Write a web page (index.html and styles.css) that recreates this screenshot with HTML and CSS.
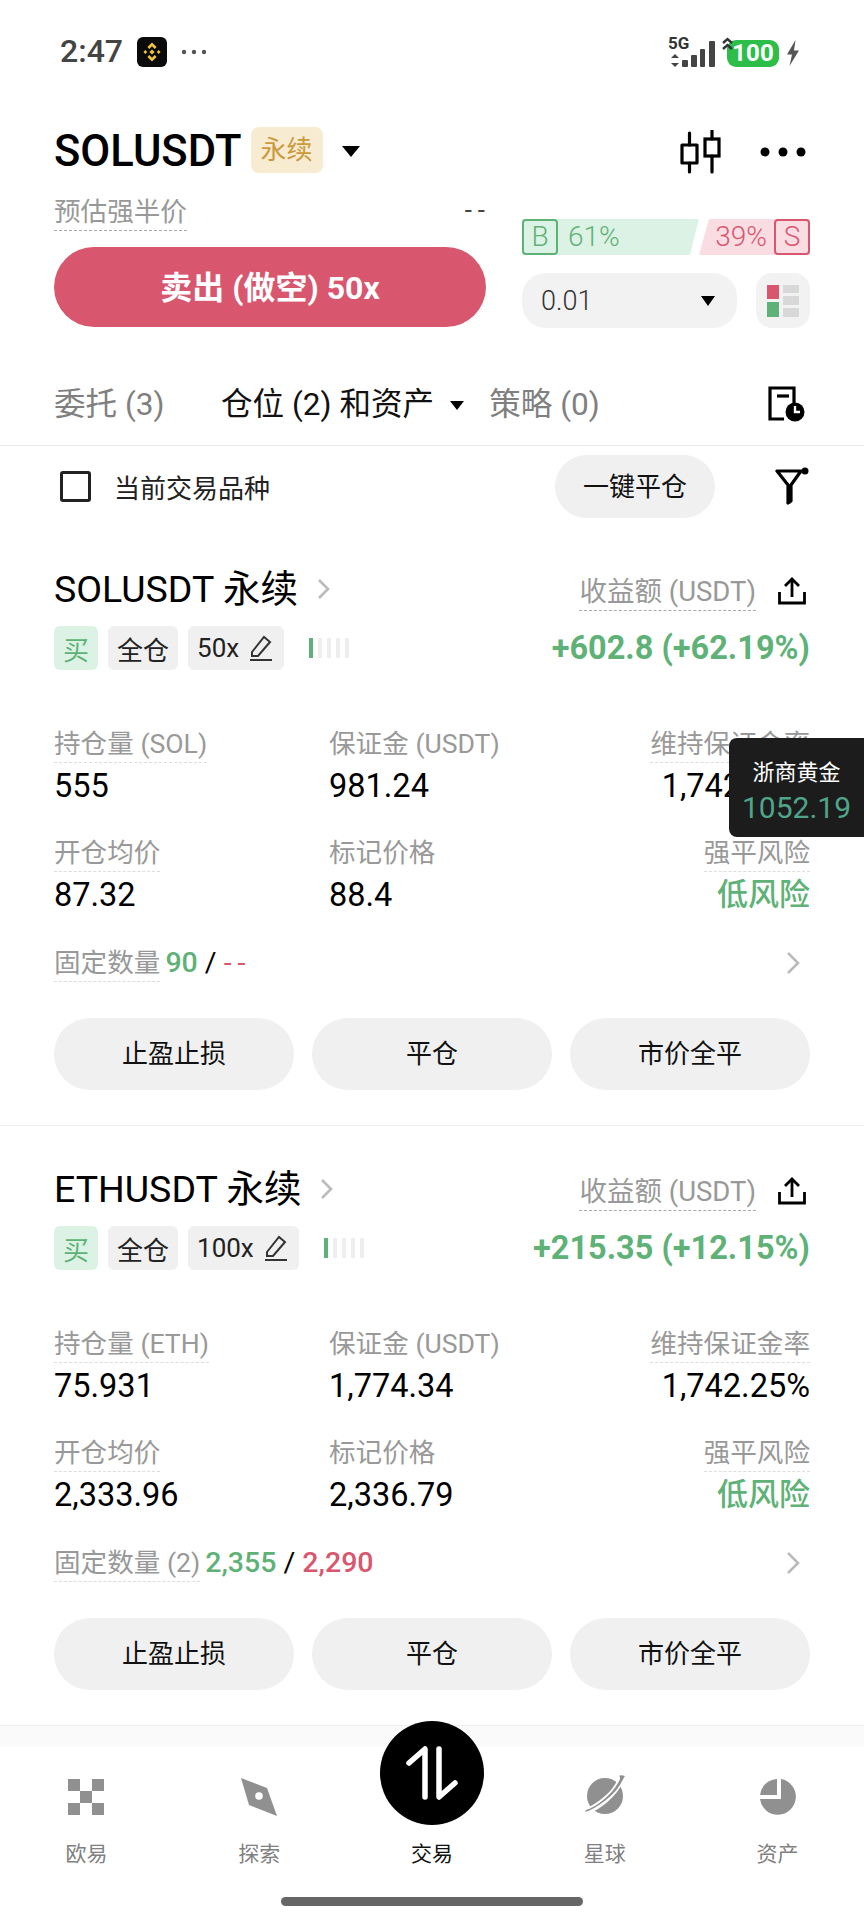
FILE: index.html
```html
<!DOCTYPE html>
<html lang="zh-CN">
<head>
    <meta charset="UTF-8">
    <meta name="viewport" content="width=device-width, initial-scale=1.0">
    <title>SOLUSDT 永续</title>
    <link rel="stylesheet" href="styles.css">
</head>
<body>
<div class="screen">

    <div class="statusbar">
        <div class="status-left">
            <span class="clock">2:47</span>
            <svg class="bn-logo" width="30" height="30" viewBox="0 0 30 30">
                <rect width="30" height="30" rx="6" fill="#0b0b0b"/>
                <path fill="#f0c33c" d="M15 5.500l4.600 4.600-1.900 1.900L15 9.300 12.300 12l-1.900-1.900zM15 24.500l-4.600-4.600 1.900-1.900 2.700 2.700 2.700-2.700 1.900 1.900zM6.400 15l1.900-1.900 1.900 1.900-1.900 1.900zM19.800 15l1.900-1.900 1.900 1.900-1.900 1.900zM15 12.400l2.600 2.600-2.600 2.600-2.600-2.600z"/>
            </svg>
            <svg width="26" height="6" viewBox="0 0 26 6" fill="#555"><circle cx="3" cy="3" r="2.200"/><circle cx="13" cy="3" r="2.200"/><circle cx="23" cy="3" r="2.200"/></svg>
        </div>
        <div class="status-right">
            <div class="signal">
                <span class="net-type">5G</span>
                <svg width="50" height="34" viewBox="0 0 50 34" fill="#444">
                    <path d="M9 18l4 4H5zM9 31l-4-4h8z"/>
                    <rect x="16" y="24" width="6" height="7" rx="1"/>
                    <rect x="25" y="19" width="6" height="12" rx="1"/>
                    <rect x="34" y="13" width="5" height="18" rx="1"/>
                    <rect x="43" y="5" width="6" height="26" rx="1"/>
                </svg>
            </div>
            <div class="battery">
                <svg class="battery-arrows" width="13" height="14" viewBox="0 0 13 14" fill="none" stroke="#333" stroke-width="2.400"><path d="M2 6l4.500-4 4.500 4M2 12l4.500-4 4.500 4"/></svg>
                <span>100</span>
            </div>
            <svg width="14" height="26" viewBox="0 0 14 26" fill="#555"><path d="M9.500 0L1 14.500h5L3.500 26 13 10.500H8z"/></svg>
        </div>
    </div>

    <div class="title-row">
        <div class="title-left">
            <span class="symbol">SOLUSDT</span>
            <span class="perp-badge">永续</span>
            <span class="caret caret-lg"></span>
        </div>
        <div class="title-right">
            <svg width="44" height="44" viewBox="0 0 44 44" fill="none" stroke="#000" stroke-width="3.200" stroke-linecap="round">
                <rect x="3" y="15" width="15" height="18" stroke-linejoin="round"/>
                <path d="M10.500 3v12M10.500 33v9"/>
                <rect x="26" y="9" width="14" height="17"/>
                <path d="M33 1v8M33 26v16"/>
            </svg>
            <svg width="46" height="10" viewBox="0 0 46 10" fill="#000"><circle cx="5" cy="5" r="4.500"/><circle cx="23" cy="5" r="4.500"/><circle cx="41" cy="5" r="4.500"/></svg>
        </div>
    </div>

    <div class="order-panel">
        <div class="order-left">
            <div class="liq-row">
                <span class="dash-label dash-dark">预估强半价</span>
                <span class="liq-value">--</span>
            </div>
            <div class="sell-btn">卖出 (做空) 50x</div>
        </div>
        <div class="order-right">
            <div class="ratio">
                <div class="ratio-buy">
                    <span class="ratio-box">B</span>
                    <span>61%</span>
                </div>
                <div class="ratio-sell">
                    <span>39%</span>
                    <span class="ratio-box">S</span>
                </div>
            </div>
            <div class="lot-row">
                <div class="lot-input">
                    <span>0.01</span>
                    <span class="caret caret-sm"></span>
                </div>
                <div class="book-btn">
                    <svg width="32" height="32" viewBox="0 0 32 32">
                        <rect x="0" y="0" width="12" height="14" fill="#d9566f"/>
                        <rect x="0" y="17" width="12" height="15" fill="#5fb277"/>
                        <rect x="16" y="0" width="16" height="8" fill="#d8d8d8"/>
                        <rect x="16" y="11" width="16" height="9" fill="#d8d8d8"/>
                        <rect x="16" y="23" width="16" height="9" fill="#d8d8d8"/>
                    </svg>
                </div>
            </div>
        </div>
    </div>

    <div class="tabs">
        <span class="tab tab-first">委托 (3)</span>
        <span class="tab tab-active">仓位 (2) 和资产</span>
        <span class="caret caret-tab"></span>
        <span class="tab">策略 (0)</span>
        <svg class="tab-icon" width="38" height="36" viewBox="0 0 38 36" fill="none">
            <path d="M26 22V2H2v31h14" stroke="#000" stroke-width="3.200"/>
            <path d="M9 10h12" stroke="#000" stroke-width="3.200"/>
            <circle cx="27" cy="26" r="9.500" fill="#000"/>
            <path d="M27 20v6h5" stroke="#fff" stroke-width="2.400"/>
        </svg>
    </div>

    <div class="filter-row">
        <span class="checkbox"></span>
        <span class="filter-text">当前交易品种</span>
        <span class="close-all">一键平仓</span>
        <svg class="filter-icon" width="36" height="38" viewBox="0 0 36 38" fill="none">
            <path d="M3 4h24l-10 14v16l-3 2V18z" stroke="#000" stroke-width="3.200" stroke-linejoin="round"/>
            <path d="M14 18h3v18l-3 1z" fill="#000"/>
            <circle cx="31" cy="4" r="3.500" fill="#000"/>
        </svg>
    </div>

    <div class="position">
        <div class="pos-head">
            <div class="pos-title">
                <span>SOLUSDT 永续</span>
                <svg class="chevron" width="14" height="22" viewBox="0 0 14 22" fill="none" stroke="#bbb" stroke-width="2.600"><path d="M2 2l9 9-9 9"/></svg>
            </div>
            <div class="pos-pnl-label">
                <span class="dash-label dash-dark">收益额 (USDT)</span>
                <svg width="28" height="28" viewBox="0 0 28 28" fill="none" stroke="#000" stroke-width="2.800"><path d="M1.500 15v11h25V15M14 20V3M7 9l7-7 7 7"/></svg>
            </div>
            <div class="pos-tags">
                <span class="tag tag-buy">买</span>
                <span class="tag">全仓</span>
                <span class="tag tag-lever">50x
                    <svg width="24" height="26" viewBox="0 0 24 26" fill="none" stroke="#333" stroke-width="2"><path d="M3 17L15 2l6 5L9 21H3zM1 25h22"/></svg>
                </span>
                <span class="meter"><i class="on"></i><i></i><i></i><i></i><i></i></span>
            </div>
            <div class="pnl">+602.8 (+62.19%)</div>
        </div>
        <div class="stats">
            <div class="stat">
                <span class="dash-label">持仓量 (SOL)</span>
                <span class="stat-value">555</span>
            </div>
            <div class="stat">
                <span class="stat-label">保证金 (USDT)</span>
                <span class="stat-value">981.24</span>
            </div>
            <div class="stat stat-right">
                <span class="dash-label">维持保证金率</span>
                <span class="stat-value">1,742.25%</span>
            </div>
            <div class="stat">
                <span class="dash-label">开仓均价</span>
                <span class="stat-value">87.32</span>
            </div>
            <div class="stat">
                <span class="stat-label">标记价格</span>
                <span class="stat-value">88.4</span>
            </div>
            <div class="stat stat-right">
                <span class="dash-label">强平风险</span>
                <span class="stat-value risk-low">低风险</span>
            </div>
        </div>
        <div class="tpsl">
            <span class="dash-label">固定数量</span>
            <span class="tpsl-values"><span class="green bold">90</span> / <span class="red wide-dash">--</span></span>
            <svg class="chevron-end" width="14" height="24" viewBox="0 0 14 24" fill="none" stroke="#bbb" stroke-width="2.600"><path d="M2 2l10 10L2 22"/></svg>
        </div>
        <div class="actions">
            <span class="action">止盈止损</span>
            <span class="action">平仓</span>
            <span class="action">市价全平</span>
        </div>
    </div>

    <div class="position">
        <div class="pos-head">
            <div class="pos-title">
                <span>ETHUSDT 永续</span>
                <svg class="chevron" width="14" height="22" viewBox="0 0 14 22" fill="none" stroke="#bbb" stroke-width="2.600"><path d="M2 2l9 9-9 9"/></svg>
            </div>
            <div class="pos-pnl-label">
                <span class="dash-label dash-dark">收益额 (USDT)</span>
                <svg width="28" height="28" viewBox="0 0 28 28" fill="none" stroke="#000" stroke-width="2.800"><path d="M1.500 15v11h25V15M14 20V3M7 9l7-7 7 7"/></svg>
            </div>
            <div class="pos-tags">
                <span class="tag tag-buy">买</span>
                <span class="tag">全仓</span>
                <span class="tag tag-lever">100x
                    <svg width="24" height="26" viewBox="0 0 24 26" fill="none" stroke="#333" stroke-width="2"><path d="M3 17L15 2l6 5L9 21H3zM1 25h22"/></svg>
                </span>
                <span class="meter"><i class="on"></i><i></i><i></i><i></i><i></i></span>
            </div>
            <div class="pnl">+215.35 (+12.15%)</div>
        </div>
        <div class="stats">
            <div class="stat">
                <span class="dash-label">持仓量 (ETH)</span>
                <span class="stat-value">75.931</span>
            </div>
            <div class="stat">
                <span class="stat-label">保证金 (USDT)</span>
                <span class="stat-value">1,774.34</span>
            </div>
            <div class="stat stat-right">
                <span class="dash-label">维持保证金率</span>
                <span class="stat-value">1,742.25%</span>
            </div>
            <div class="stat">
                <span class="dash-label">开仓均价</span>
                <span class="stat-value">2,333.96</span>
            </div>
            <div class="stat">
                <span class="stat-label">标记价格</span>
                <span class="stat-value">2,336.79</span>
            </div>
            <div class="stat stat-right">
                <span class="dash-label">强平风险</span>
                <span class="stat-value risk-low">低风险</span>
            </div>
        </div>
        <div class="tpsl">
            <span class="dash-label">固定数量 (2)</span>
            <span class="tpsl-values"><span class="green bold">2,355</span> / <span class="red bold">2,290</span></span>
            <svg class="chevron-end" width="14" height="24" viewBox="0 0 14 24" fill="none" stroke="#bbb" stroke-width="2.600"><path d="M2 2l10 10L2 22"/></svg>
        </div>
        <div class="actions">
            <span class="action">止盈止损</span>
            <span class="action">平仓</span>
            <span class="action">市价全平</span>
        </div>
    </div>

    <div class="nav-shade"></div>
    <div class="nav">
        <div class="nav-item">
            <svg width="38" height="38" viewBox="0 0 38 38" fill="#909090">
                <rect x="1" y="1" width="12" height="12"/><rect x="25" y="1" width="12" height="12"/>
                <rect x="13" y="13" width="12" height="12"/>
                <rect x="1" y="25" width="12" height="12"/><rect x="25" y="25" width="12" height="12"/>
            </svg>
            <span>欧易</span>
        </div>
        <div class="nav-item">
            <svg width="38" height="38" viewBox="0 0 38 38">
                <path d="M1 0l26 10 10 28-28-11z" fill="#909090"/>
                <circle cx="19" cy="18" r="3.800" fill="#fff"/>
            </svg>
            <span>探索</span>
        </div>
        <div class="nav-item nav-active">
            <div class="trade-circle">
                <svg width="56" height="54" viewBox="0 0 56 54" fill="none" stroke="#fff" stroke-width="5.500" stroke-linecap="round" stroke-linejoin="round">
                    <path d="M5 17L21 3v48M51 37L35 51V3"/>
                </svg>
            </div>
            <span>交易</span>
        </div>
        <div class="nav-item">
            <svg width="42" height="42" viewBox="0 0 42 42">
                <circle cx="21" cy="22" r="18" fill="#909090"/>
                <path d="M3 37C14 33 31 20 36 7" fill="none" stroke="#fff" stroke-width="6"/>
                <path d="M1 38c11-3 30-17 36-29 2-3 3-6 4-7-3-1-5-1-6 0 2 1 1 4-1 7C28 20 13 33 2 36z" fill="#909090"/>
            </svg>
            <span>星球</span>
        </div>
        <div class="nav-item">
            <svg width="38" height="38" viewBox="0 0 38 38" fill="#909090">
                <path d="M18 1A18 18 0 0 0 1 17h17z"/>
                <path d="M22 1v20H1a18 18 0 1 0 21-20z"/>
            </svg>
            <span>资产</span>
        </div>
    </div>
    <div class="home-bar"></div>

    <div class="float-quote">
        <span class="quote-name">浙商黄金</span>
        <span class="quote-price">1052.19</span>
    </div>
</div>
</body>
</html>
```

FILE: styles.css
```css
* {
    box-sizing: border-box;
}
body {
    margin: 0;
    font-family: Roboto, "Noto Sans CJK SC", sans-serif;
    background: #fff;
    color: #000;
}
.screen {
    position: relative;
    width: 864px;
    height: 1920px;
    overflow: hidden;
}

/* status bar */
.statusbar {
    height: 104px;
    padding: 36px 61px 0 60px;
    display: flex;
    justify-content: space-between;
    align-items: flex-start;
}
.status-left {
    display: flex;
    align-items: center;
    gap: 14px;
    height: 31px;
}
.clock {
    font-size: 32px;
    font-weight: 500;
    color: #444;
    line-height: 31px;
}
.status-right {
    display: flex;
    align-items: center;
    gap: 7px;
    margin-right: 3px;
}
.signal {
    position: relative;
    height: 34px;
}
.net-type {
    position: absolute;
    left: 2px;
    top: -3px;
    font-size: 17px;
    font-weight: 700;
    line-height: 20px;
    color: #333;
}
.battery {
    position: relative;
    width: 52px;
    height: 27px;
    margin-left: 4px;
    background: #2dbe4a;
    border-radius: 9px;
    color: #fff;
    font-size: 24px;
    font-weight: 700;
    line-height: 27px;
    text-align: center;
}
.battery-arrows {
    position: absolute;
    left: -6px;
    top: -3px;
}

/* title */
.title-row {
    height: 90px;
    padding: 5px 58px 0 54px;
    display: flex;
    justify-content: space-between;
    align-items: center;
}
.title-left {
    display: flex;
    align-items: center;
}
.symbol {
    font-size: 43.500px;
    font-weight: 500;
}
.perp-badge {
    width: 72px;
    height: 46px;
    margin-left: 9px;
    margin-top: -3px;
    background: #f7ebd2;
    border-radius: 8px;
    color: #cc9a3a;
    font-size: 26px;
    line-height: 46px;
    text-align: center;
}
.caret {
    display: inline-block;
    width: 0;
    height: 0;
    border-style: solid;
    border-color: #000 transparent transparent transparent;
}
.caret-lg {
    margin-left: 19px;
    border-width: 11px 9px 0 9px;
}
.caret-sm {
    border-width: 10px 7px 0 7px;
}
.caret-tab {
    margin-left: 16px;
    border-width: 9px 7px 0 7px;
}
.title-right {
    display: flex;
    align-items: center;
    gap: 37px;
}

/* order panel */
.order-panel {
    height: 144px;
    padding: 0 54px;
    display: flex;
    justify-content: space-between;
}
.order-left {
    width: 432px;
}
.liq-row {
    display: flex;
    justify-content: space-between;
    height: 53px;
}
.dash-label {
    display: inline-block;
    height: 37px;
    border-bottom: 1px dashed #ddd;
    color: #999;
    font-size: 26.600px;
    line-height: 35px;
}
.dash-dark {
    border-bottom-color: #aaa;
}
.liq-value {
    font-size: 26px;
    letter-spacing: 6px;
    margin-right: -5px;
    color: #444;
    line-height: 32px;
}
.sell-btn {
    height: 80px;
    background: #d9566f;
    border-radius: 40px;
    color: #fff;
    font-size: 32px;
    font-weight: 700;
    line-height: 82px;
    text-align: center;
}
.order-right {
    width: 288px;
    padding-top: 25px;
}
.ratio {
    display: flex;
    height: 36px;
    font-size: 28px;
    font-weight: 300;
    line-height: 36px;
}
.ratio-buy,
.ratio-sell {
    display: flex;
    align-items: center;
}
.ratio-buy {
    gap: 10px;
    width: 177px;
    background: #dcf2e4;
    color: #5fb277;
    clip-path: polygon(0 0, 100% 0, calc(100% - 9px) 100%, 0 100%);
}
.ratio-sell {
    gap: 7px;
    flex: 1;
    justify-content: flex-end;
    background: #f9dde3;
    color: #d9566f;
    clip-path: polygon(10px 0, 100% 0, 100% 100%, 0 100%);
}
.ratio-box {
    width: 36px;
    height: 36px;
    border: 2px solid currentColor;
    border-radius: 4px;
    line-height: 32px;
    text-align: center;
}
.lot-row {
    display: flex;
    justify-content: space-between;
    margin-top: 18px;
}
.lot-input {
    width: 215px;
    height: 55px;
    padding: 0 22px 0 19px;
    display: flex;
    align-items: center;
    justify-content: space-between;
    background: #f2f2f2;
    border-radius: 24px;
    color: #333;
    font-size: 27px;
    font-weight: 300;
}
.book-btn {
    width: 54px;
    height: 55px;
    display: flex;
    align-items: center;
    justify-content: center;
    background: #f2f2f2;
    border-radius: 16px;
}

/* tabs */
.tabs {
    height: 108px;
    padding: 48px 58px 0 54px;
    display: flex;
    align-items: flex-start;
    border-bottom: 1px solid #e8e8e8;
}
.tab {
    font-size: 31.600px;
    line-height: 38px;
    color: #808080;
}
.tab-first {
    width: 167px;
}
.tab-active {
    color: #111;
}
.caret-tab {
    margin-top: 15px;
    margin-right: 25px;
}
.tab-icon {
    margin-left: auto;
}

/* filter row */
.filter-row {
    height: 80px;
    padding: 0 54px 0 60px;
    display: flex;
    align-items: center;
}
.checkbox {
    width: 31px;
    height: 31px;
    border: 3px solid #222;
    border-radius: 3px;
}
.filter-text {
    margin-left: 23px;
    font-size: 26px;
    color: #222;
}
.close-all {
    width: 160px;
    height: 63px;
    margin-left: auto;
    background: #f0f0f0;
    border-radius: 32px;
    font-size: 26px;
    line-height: 64px;
    text-align: center;
    color: #111;
}
.filter-icon {
    margin-left: 59px;
}

/* position card */
.position {
    height: 600px;
    padding: 39px 54px 0 54px;
    border-bottom: 1px solid #eee;
}
.pos-head {
    display: grid;
    grid-template-columns: 1fr auto;
    grid-template-rows: 44px 44px;
    row-gap: 17px;
}
.pos-title {
    display: flex;
    align-items: center;
    padding-top: 3px;
    font-size: 37.500px;
    line-height: 44px;
}
.chevron {
    margin-left: 19px;
}
.pos-pnl-label {
    display: flex;
    justify-content: flex-end;
    align-items: flex-start;
    gap: 22px;
    padding-right: 4px;
    padding-top: 9px;
}
.pos-pnl-label .dash-label {
    font-size: 27.500px;
}
.pos-pnl-label svg {
    margin-top: 3px;
}
.pos-tags {
    display: flex;
    align-items: center;
    gap: 10px;
}
.tag {
    height: 44px;
    padding: 0 9px;
    display: flex;
    align-items: center;
    gap: 8px;
    background: #f0f0f0;
    border-radius: 6px;
    font-size: 26px;
    color: #222;
}
.tag-lever {
    gap: 10px;
    padding-right: 11px;
}
.tag-buy {
    background: #dcf2e4;
    color: #5fb277;
}
.meter {
    display: flex;
    gap: 5px;
    margin-left: 15px;
}
.meter i {
    width: 4px;
    height: 20px;
    background: #eee;
}
.meter .on {
    background: #5fb277;
}
.pnl {
    font-size: 32.500px;
    font-weight: 700;
    line-height: 44px;
    color: #5fb277;
    text-align: right;
}
.stats {
    margin-top: 56px;
    display: grid;
    grid-template-columns: 275px 275px 1fr;
    row-gap: 31px;
}
.stat {
    display: flex;
    flex-direction: column;
    align-items: flex-start;
}
.stat-right {
    align-items: flex-end;
}
.stat-label {
    height: 37px;
    color: #999;
    font-size: 26.600px;
    line-height: 35px;
}
.stat-value {
    height: 38px;
    margin-top: 3px;
    font-size: 32.500px;
    line-height: 40px;
}
.risk-low {
    font-size: 31px;
    font-weight: 500;
    color: #5fb277;
}
.green {
    color: #5fb277;
}
.red {
    color: #d9566f;
}
.bold {
    font-weight: 500;
}
.wide-dash {
    letter-spacing: 6px;
}
.tpsl {
    margin-top: 32px;
    height: 37px;
    display: flex;
    align-items: flex-start;
}
.tpsl-values {
    margin-left: 5px;
    font-size: 28.500px;
    line-height: 36px;
}
.chevron-end {
    margin-left: auto;
    margin-right: 10px;
    margin-top: 6px;
}
.actions {
    margin-top: 36px;
    display: grid;
    grid-template-columns: repeat(3, 240px);
    justify-content: space-between;
}
.action {
    height: 72px;
    background: #f0f0f0;
    border-radius: 36px;
    font-size: 26px;
    line-height: 72px;
    text-align: center;
    color: #111;
}

/* bottom nav */
.nav-shade {
    height: 21px;
    background: #fafafa;
}
.nav {
    height: 144px;
    display: grid;
    grid-template-columns: repeat(5, 1fr);
}
.nav-item {
    position: relative;
    display: flex;
    flex-direction: column;
    align-items: center;
    justify-content: flex-end;
    height: 122px;
    font-size: 21px;
    line-height: 30px;
    color: #808080;
}
.nav-item svg {
    margin-bottom: 23px;
}
.nav-active {
    color: #111;
}
.trade-circle {
    position: absolute;
    left: 50%;
    top: -26px;
    width: 104px;
    height: 104px;
    margin-left: -52px;
    display: flex;
    align-items: center;
    justify-content: center;
    background: #000;
    border-radius: 50%;
}
.trade-circle svg {
    margin-bottom: 0;
}
.home-bar {
    width: 302px;
    height: 9px;
    margin: 6px auto 0;
    background: #666;
    border-radius: 5px;
}

/* floating quote */
.float-quote {
    position: absolute;
    left: 729px;
    top: 738px;
    width: 135px;
    height: 99px;
    padding-top: 19px;
    display: flex;
    flex-direction: column;
    align-items: center;
    background: #1c1c1c;
    border-radius: 8px 0 0 8px;
}
.quote-name {
    font-size: 22px;
    line-height: 32px;
    color: #fff;
}
.quote-price {
    font-size: 30px;
    line-height: 38px;
    color: #4fa58a;
}
```
